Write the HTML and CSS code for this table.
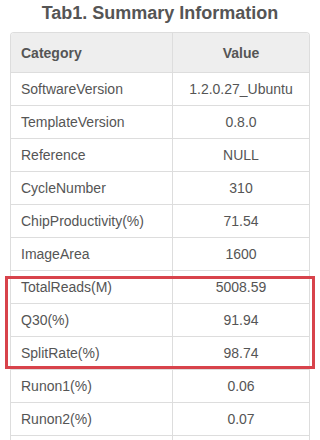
FILE: index.html
```html
<!DOCTYPE html>
<html>
<head>
<meta charset="utf-8">
<link rel="stylesheet" href="styles.css">
</head>
<body>
<h1 class="title">Tab1. Summary Information</h1>
<div class="table">
  <div class="row head"><div class="cell key">Category</div><div class="cell val">Value</div></div>
  <div class="row"><div class="cell key">SoftwareVersion</div><div class="cell val">1.2.0.27_Ubuntu</div></div>
  <div class="row"><div class="cell key">TemplateVersion</div><div class="cell val">0.8.0</div></div>
  <div class="row"><div class="cell key">Reference</div><div class="cell val">NULL</div></div>
  <div class="row"><div class="cell key">CycleNumber</div><div class="cell val">310</div></div>
  <div class="row"><div class="cell key">ChipProductivity(%)</div><div class="cell val">71.54</div></div>
  <div class="row"><div class="cell key">ImageArea</div><div class="cell val">1600</div></div>
  <div class="row"><div class="cell key">TotalReads(M)</div><div class="cell val">5008.59</div></div>
  <div class="row"><div class="cell key">Q30(%)</div><div class="cell val">91.94</div></div>
  <div class="row"><div class="cell key">SplitRate(%)</div><div class="cell val">98.74</div></div>
  <div class="row"><div class="cell key">Runon1(%)</div><div class="cell val">0.06</div></div>
  <div class="row"><div class="cell key">Runon2(%)</div><div class="cell val">0.07</div></div>
  <div class="row"><div class="cell key"></div><div class="cell val"></div></div>
  <div class="highlight"></div>
</div>
</body>
</html>
```
FILE: styles.css
```css
html, body {
  margin: 0;
  padding: 0;
  background: #fff;
}
body {
  width: 320px;
  height: 440px;
  overflow: hidden;
  font-family: "Liberation Sans", Arial, sans-serif;
  color: #555;
}
.title {
  box-sizing: border-box;
  height: 32px;
  margin: 0;
  padding-top: 2px;
  font-size: 18px;
  line-height: 22px;
  font-weight: bold;
  text-align: center;
  color: #555;
}
.table {
  position: relative;
  margin: 0 10px;
  border: 1px solid #ddd;
  border-bottom: none;
  border-radius: 4px 4px 0 0;
}
.row {
  display: grid;
  grid-template-columns: 162px 1fr;
  height: 33px;
  box-sizing: border-box;
  border-top: 1px solid #ddd;
  font-size: 14px;
}
.row.head {
  height: 39px;
  border-top: none;
  background: #eee;
  font-weight: bold;
  border-radius: 3px 3px 0 0;
}
.cell {
  display: flex;
  align-items: center;
  white-space: nowrap;
}
.key {
  box-sizing: border-box;
  padding-left: 10px;
  border-right: 1px solid #ddd;
}
.val {
  justify-content: center;
}
.highlight {
  position: absolute;
  left: -6px;
  top: 243px;
  width: 310px;
  height: 93px;
  box-sizing: border-box;
  border: 3px solid #d8434b;
}
```
